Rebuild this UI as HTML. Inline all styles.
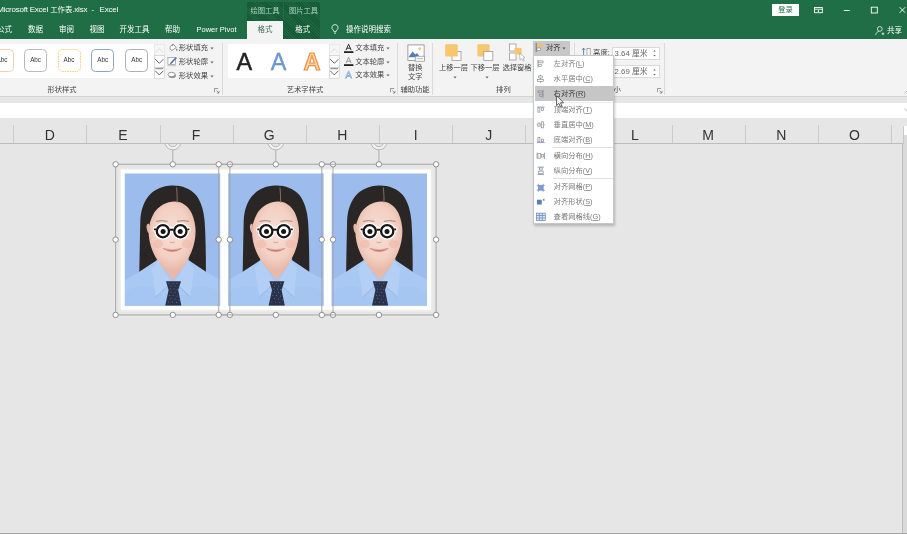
<!DOCTYPE html>
<html lang="zh-CN"><head><meta charset="utf-8"><title>Excel</title>
<style>
html,body{margin:0;padding:0;}
body{width:907px;height:534px;overflow:hidden;position:relative;background:#e6e6e6;font-family:"Liberation Sans","Noto Sans CJK SC",sans-serif;}
.t{position:absolute;white-space:nowrap;display:block;}
.r{position:absolute;}
svg{position:absolute;overflow:visible;}
u{text-decoration:underline;text-underline-offset:0.8px;text-decoration-thickness:0.5px;text-decoration-color:#9a9a9a;}
#w{position:absolute;left:0;top:0;width:907px;height:534px;will-change:transform;}
</style></head><body><div id="w">
<div class="r" style="left:0.0px;top:0.0px;width:907.0px;height:39.0px;background:#1f6e45;"></div>
<div class="r" style="left:246.7px;top:2.2px;width:73.3px;height:36.8px;background:repeating-linear-gradient(45deg,#155836 0 1px,#1c6740 1px 2px);"></div>
<div class="r" style="left:283.3px;top:2.2px;width:0.8px;height:17.0px;background:#1f6f44;"></div>
<span class="t" style="left:-2.8px;top:4.4px;height:12px;line-height:12px;font-size:8px;color:#fff;letter-spacing:-0.22px;">Microsoft Excel <span style="font-size:7.4px;letter-spacing:0">工作表</span>.xlsx</span>
<span class="t" style="left:91.6px;top:4.4px;height:12px;line-height:12px;font-size:8px;color:#fff;">-</span>
<span class="t" style="left:99.6px;top:4.4px;height:12px;line-height:12px;font-size:8px;color:#fff;letter-spacing:-0.22px;">Excel</span>
<span class="t" style="left:265.0px;top:5.4px;height:12px;line-height:12px;font-size:7.3px;color:#b4d3c2;transform:translateX(-50%);">绘图工具</span>
<span class="t" style="left:303.5px;top:5.4px;height:12px;line-height:12px;font-size:7.3px;color:#b4d3c2;transform:translateX(-50%);">图片工具</span>
<div class="r" style="left:771.6px;top:4.4px;width:27.7px;height:11.4px;background:#fff;"></div>
<span class="t" style="left:785.5px;top:4.3px;height:12px;line-height:12px;font-size:7.3px;color:#1f6e45;transform:translateX(-50%);">登录</span>
<svg style="left:810px;top:2px" width="97" height="18" viewBox="810 2 97 18" fill="none" stroke="#fff" stroke-width="0.9"><rect x="814.500" y="7.500" width="7.800" height="5.200"/><path d="M814.500 9.200H822.300M818.400 10V12" /><path d="M843.8 10.5H849.8"/><rect x="871.300" y="7.200" width="6" height="5.800"/><path d="M899.6 7.2L905.2 12.8M905.2 7.2L899.6 12.8"/></svg>
<span class="t" style="left:4.5px;top:24.2px;height:12px;line-height:12px;font-size:7.5px;color:#fff;transform:translateX(-50%);">公式</span>
<span class="t" style="left:35.5px;top:24.2px;height:12px;line-height:12px;font-size:7.5px;color:#fff;transform:translateX(-50%);">数据</span>
<span class="t" style="left:66.5px;top:24.2px;height:12px;line-height:12px;font-size:7.5px;color:#fff;transform:translateX(-50%);">审阅</span>
<span class="t" style="left:97.0px;top:24.2px;height:12px;line-height:12px;font-size:7.5px;color:#fff;transform:translateX(-50%);">视图</span>
<span class="t" style="left:134.5px;top:24.2px;height:12px;line-height:12px;font-size:7.5px;color:#fff;transform:translateX(-50%);">开发工具</span>
<span class="t" style="left:172.5px;top:24.2px;height:12px;line-height:12px;font-size:7.5px;color:#fff;transform:translateX(-50%);">帮助</span>
<span class="t" style="left:216.5px;top:24.2px;height:12px;line-height:12px;font-size:7.5px;color:#fff;transform:translateX(-50%);">Power Pivot</span>
<div class="r" style="left:246.7px;top:21.3px;width:36.5px;height:18.0px;background:#f3f3f3;"></div>
<span class="t" style="left:265.0px;top:24.4px;height:12px;line-height:12px;font-size:7.5px;color:#3b6b52;transform:translateX(-50%);">格式</span>
<span class="t" style="left:302.8px;top:24.4px;height:12px;line-height:12px;font-size:7.5px;color:#fff;transform:translateX(-50%);">格式</span>
<svg style="left:329px;top:23px" width="12" height="13" viewBox="0 0 12 13" fill="none" stroke="#fff" stroke-width="0.8"><path d="M6 1.6a3 3 0 0 0-1.7 5.5c.5.5.6.9.6 1.6h2.2c0-.7.1-1.1.6-1.6A3 3 0 0 0 6 1.6zM5 10.2h2"/></svg>
<span class="t" style="left:346.0px;top:24.4px;height:12px;line-height:12px;font-size:7.5px;color:#fff;">操作说明搜索</span>
<svg style="left:873.5px;top:24.8px" width="11" height="11" viewBox="0 0 12 12" fill="none" stroke="#fff" stroke-width="0.8"><circle cx="6.3" cy="4.3" r="2.6"/><path d="M1.8 11c.4-2.4 1.8-3.6 3.4-3.9M8.3 9.6h3M9.8 8.1v3"/></svg>
<span class="t" style="left:887.0px;top:24.5px;height:12px;line-height:12px;font-size:7.5px;color:#fff;">共享</span>
<div class="r" style="left:0.0px;top:39.0px;width:907.0px;height:57.5px;background:#f3f3f3;"></div>
<div class="r" style="left:0.0px;top:96.2px;width:907.0px;height:0.9px;background:#d4d4d4;"></div>
<div class="r" style="left:0.0px;top:102.5px;width:907.0px;height:15.3px;background:#fff;"></div>
<div class="r" style="left:0.0px;top:44.0px;width:153.6px;height:34.3px;background:#fff;"></div>
<div class="r" style="left:-9.5px;top:49.2px;width:23.0px;height:23.0px;border:1px solid #f2cfb0;border-radius:4.5px;box-sizing:border-box;background:#fff"></div>
<span class="t" style="left:2.0px;top:54.2px;height:12px;line-height:12px;font-size:6.3px;color:#333;transform:translateX(-50%);">Abc</span>
<div class="r" style="left:24.1px;top:49.2px;width:23.0px;height:23.0px;border:1px solid #bababa;border-radius:4.5px;box-sizing:border-box;background:#fff"></div>
<span class="t" style="left:35.6px;top:54.2px;height:12px;line-height:12px;font-size:6.3px;color:#333;transform:translateX(-50%);">Abc</span>
<svg style="left:57.5px;top:49.200px" width="23" height="23" viewBox="0 0 23 23"><rect x="0.500" y="0.500" width="22" height="22" rx="4.200" fill="#fff" stroke="#f5cb78" stroke-width="1" stroke-dasharray="1.500 1"/></svg>
<span class="t" style="left:69.0px;top:54.2px;height:12px;line-height:12px;font-size:6.3px;color:#333;transform:translateX(-50%);">Abc</span>
<div class="r" style="left:91.2px;top:49.2px;width:23.0px;height:23.0px;border:1.5px solid #8fa5be;border-radius:4.5px;box-sizing:border-box;background:#fff"></div>
<span class="t" style="left:102.7px;top:54.2px;height:12px;line-height:12px;font-size:6.3px;color:#333;transform:translateX(-50%);">Abc</span>
<div class="r" style="left:125.2px;top:49.2px;width:23.0px;height:23.0px;border:1px solid #b0b0b0;border-radius:4.5px;box-sizing:border-box;background:#fff"></div>
<span class="t" style="left:136.7px;top:54.2px;height:12px;line-height:12px;font-size:6.3px;color:#333;transform:translateX(-50%);">Abc</span>
<svg style="left:153.8px;top:44px" width="10.6" height="35" viewBox="0 0 10.6 35" fill="none"><rect x="0.3" y="0.3" width="10" height="11" fill="#f6f6f6" stroke="#e2e2e2" stroke-width="0.6"/><rect x="0.3" y="11.5" width="10" height="12" fill="#fdfdfd" stroke="#c9c9c9" stroke-width="0.6"/><rect x="0.3" y="23.7" width="10" height="10.8" fill="#fdfdfd" stroke="#c9c9c9" stroke-width="0.6"/><path d="M1.4 8.6L5.3 4.7L9.2 8.6" stroke="#d6d6d6" stroke-width="0.8"/><path d="M1.2 15.2L5.3 19.3L9.4 15.2" stroke="#555" stroke-width="0.9"/><path d="M1.4 24.6H9.2" stroke="#999" stroke-width="1.3"/><path d="M1.2 26.8L5.3 30.9L9.4 26.8" stroke="#555" stroke-width="0.9"/></svg>
<svg style="left:329.4px;top:44px" width="10.6" height="35" viewBox="0 0 10.6 35" fill="none"><rect x="0.3" y="0.3" width="10" height="11" fill="#f6f6f6" stroke="#e2e2e2" stroke-width="0.6"/><rect x="0.3" y="11.5" width="10" height="12" fill="#fdfdfd" stroke="#c9c9c9" stroke-width="0.6"/><rect x="0.3" y="23.7" width="10" height="10.8" fill="#fdfdfd" stroke="#c9c9c9" stroke-width="0.6"/><path d="M1.4 8.6L5.3 4.7L9.2 8.6" stroke="#d6d6d6" stroke-width="0.8"/><path d="M1.2 15.2L5.3 19.3L9.4 15.2" stroke="#555" stroke-width="0.9"/><path d="M1.4 24.6H9.2" stroke="#999" stroke-width="1.3"/><path d="M1.2 26.8L5.3 30.9L9.4 26.8" stroke="#555" stroke-width="0.9"/></svg>
<span class="t" style="left:178.8px;top:42.4px;height:12px;line-height:12px;font-size:7.3px;color:#444;">形状填充</span>
<svg style="left:209.5px;top:47.4px" width="4" height="3" viewBox="0 0 4 3"><path d="M0.4 0.6H3.6L2 2.4z" fill="#666"/></svg>
<span class="t" style="left:178.8px;top:55.5px;height:12px;line-height:12px;font-size:7.3px;color:#444;">形状轮廓</span>
<svg style="left:209.5px;top:60.5px" width="4" height="3" viewBox="0 0 4 3"><path d="M0.4 0.6H3.6L2 2.4z" fill="#666"/></svg>
<span class="t" style="left:178.8px;top:69.5px;height:12px;line-height:12px;font-size:7.3px;color:#444;">形状效果</span>
<svg style="left:209.5px;top:74.5px" width="4" height="3" viewBox="0 0 4 3"><path d="M0.4 0.6H3.6L2 2.4z" fill="#666"/></svg>
<svg style="left:167.6px;top:42.800px" width="10.200" height="9.350" viewBox="0 0 12 11" fill="none" stroke="#777" stroke-width="0.9"><path d="M3.2 3.6L6.4 1.4L9.6 5.4L5.6 8.2C4.6 8.8 3.4 8.4 2.8 7.4C2.2 6.2 2.4 4.4 3.2 3.6z" fill="#fff"/><path d="M5.4 1.2V3.6"/><path d="M10.4 6.6c.5.8.8 1.2.8 1.7a.8.8 0 0 1-1.6 0c0-.5.3-.9.8-1.7z" fill="#666" stroke="none"/></svg>
<svg style="left:166.8px;top:55.800px" width="11" height="11" viewBox="0 0 12 12" fill="none" stroke="#9a9a9a" stroke-width="0.8"><rect x="1" y="1.6" width="8.4" height="7.6" fill="#fff"/><path d="M3.6 7.4L9.6 1.2L10.8 2.4L4.8 8.4L3.2 8.8z" fill="#4f74a8" stroke="#4f74a8" stroke-width="0.1"/><path d="M0.8 10.6H10" stroke="#c8c8c8" stroke-width="1.2"/></svg>
<svg style="left:167.4px;top:70.800px" width="9.600" height="8" viewBox="0 0 12 10" fill="none" stroke="#777" stroke-width="0.9"><ellipse cx="6.6" cy="5.8" rx="4.4" ry="2.8" fill="#888" stroke="none"/><ellipse cx="5.8" cy="4.4" rx="4.4" ry="2.8" fill="#fff"/></svg>
<span class="t" style="left:62.0px;top:83.8px;height:12px;line-height:12px;font-size:7.3px;color:#444;transform:translateX(-50%);">形状样式</span>
<svg style="left:214.4px;top:88.0px" width="6" height="6" viewBox="0 0 6 6" fill="none" stroke="#777" stroke-width="0.7"><path d="M0.5 4.2V0.5H4.2"/><path d="M2.4 2.4L5 5M5 2.8V5H2.8"/></svg>
<div class="r" style="left:222.0px;top:42.5px;width:0.9px;height:52.0px;background:#dadada;"></div>
<div class="r" style="left:228.0px;top:44.0px;width:101.2px;height:34.3px;background:#fff;"></div>
<span class="t" style="left:244.3px;top:49.2px;height:26px;line-height:26px;font-size:23.4px;color:#222;transform:translateX(-50%);-webkit-text-stroke:0.5px #222;">A</span>
<span class="t" style="left:278.5px;top:49.2px;height:26px;line-height:26px;font-size:23.4px;color:#6e98d6;transform:translateX(-50%);-webkit-text-stroke:0.3px #5a86c8;">A</span>
<span class="t" style="left:311.9px;top:49.2px;height:26px;line-height:26px;font-size:23.4px;color:#fbd5a8;transform:translateX(-50%);-webkit-text-stroke:1.1px #ef8f3a;font-weight:bold;">A</span>
<span class="t" style="left:355.2px;top:42.4px;height:12px;line-height:12px;font-size:7.3px;color:#444;">文本填充</span>
<svg style="left:385.5px;top:47.4px" width="4" height="3" viewBox="0 0 4 3"><path d="M0.4 0.6H3.6L2 2.4z" fill="#666"/></svg>
<span class="t" style="left:355.2px;top:55.6px;height:12px;line-height:12px;font-size:7.3px;color:#444;">文本轮廓</span>
<svg style="left:385.5px;top:60.6px" width="4" height="3" viewBox="0 0 4 3"><path d="M0.4 0.6H3.6L2 2.4z" fill="#666"/></svg>
<span class="t" style="left:355.2px;top:69.3px;height:12px;line-height:12px;font-size:7.3px;color:#444;">文本效果</span>
<svg style="left:385.5px;top:74.3px" width="4" height="3" viewBox="0 0 4 3"><path d="M0.4 0.6H3.6L2 2.4z" fill="#666"/></svg>
<svg style="left:342.5px;top:43px" width="12" height="11" viewBox="0 0 12 11" fill="none"><path d="M3 7.2L5.6 1.2L8.2 7.2M4 5.2H7.2" stroke="#333" stroke-width="1"/><rect x="1" y="8.2" width="9.4" height="1.8" fill="#222"/></svg>
<svg style="left:342.5px;top:56px" width="12" height="11" viewBox="0 0 12 11" fill="none"><path d="M3 7.2L5.6 1.2L8.2 7.2M4 5.2H7.2" stroke="#888" stroke-width="0.8"/><rect x="1" y="8.2" width="9.4" height="1.8" fill="#222"/></svg>
<svg style="left:342.5px;top:69.5px" width="12" height="11" viewBox="0 0 12 11" fill="none"><path d="M2.6 8.6L5.6 1.4L8.6 8.6M3.8 6H7.4" stroke="#5b8fd0" stroke-width="1.3" stroke-linejoin="round"/><path d="M2.6 8.6L5.6 1.4L8.6 8.6M3.8 6H7.4" stroke="#fff" stroke-width="0.4"/></svg>
<span class="t" style="left:305.0px;top:83.8px;height:12px;line-height:12px;font-size:7.3px;color:#444;transform:translateX(-50%);">艺术字样式</span>
<svg style="left:390.1px;top:88.0px" width="6" height="6" viewBox="0 0 6 6" fill="none" stroke="#777" stroke-width="0.7"><path d="M0.5 4.2V0.5H4.2"/><path d="M2.4 2.4L5 5M5 2.8V5H2.8"/></svg>
<div class="r" style="left:397.3px;top:42.5px;width:0.9px;height:52.0px;background:#dadada;"></div>
<svg style="left:406.5px;top:43.5px" width="19" height="19" viewBox="0 0 19 19" fill="none"><rect x="0.9" y="0.9" width="16.2" height="15.6" fill="#fff" stroke="#8a8a8a" stroke-width="0.8"/><circle cx="12.8" cy="4.6" r="1.4" fill="#f3c669"/><path d="M1.4 13.2L5.6 7.6L8.4 10.4L10 9L13 13.2z" fill="#4f7fb8"/><rect x="8.2" y="12.2" width="9.4" height="5" fill="#fff" stroke="#8a8a8a" stroke-width="0.7"/><path d="M9.6 14.7H16" stroke="#9ab" stroke-width="0.8"/></svg>
<span class="t" style="left:415.3px;top:61.9px;height:12px;line-height:12px;font-size:7.3px;color:#444;transform:translateX(-50%);">替换</span>
<span class="t" style="left:415.3px;top:70.5px;height:12px;line-height:12px;font-size:7.3px;color:#444;transform:translateX(-50%);">文字</span>
<span class="t" style="left:415.0px;top:83.8px;height:12px;line-height:12px;font-size:7.3px;color:#444;transform:translateX(-50%);">辅助功能</span>
<div class="r" style="left:432.2px;top:42.5px;width:0.9px;height:52.0px;background:#dadada;"></div>
<svg style="left:444px;top:43px" width="19" height="19" viewBox="444 43 19 19"><rect x="452" y="51.4" width="9" height="9" fill="#fff" stroke="#9a9a9a" stroke-width="0.8"/><rect x="445.200" y="44.200" width="12.600" height="12.300" rx="1" fill="#f8c66c"/></svg>
<span class="t" style="left:453.5px;top:61.9px;height:12px;line-height:12px;font-size:7.3px;color:#444;transform:translateX(-50%);">上移一层</span>
<svg style="left:452.8px;top:76px" width="4" height="3" viewBox="0 0 4 3"><path d="M0.4 0.6H3.6L2 2.4z" fill="#666"/></svg>
<svg style="left:476px;top:43px" width="19" height="19" viewBox="476 43 19 19"><rect x="477.400" y="44.200" width="12.200" height="12.300" rx="1" fill="#f8c66c"/><rect x="483.8" y="51.4" width="9" height="9" fill="#fff" stroke="#9a9a9a" stroke-width="0.8"/></svg>
<span class="t" style="left:485.0px;top:61.9px;height:12px;line-height:12px;font-size:7.3px;color:#444;transform:translateX(-50%);">下移一层</span>
<svg style="left:484.6px;top:76px" width="4" height="3" viewBox="0 0 4 3"><path d="M0.4 0.6H3.6L2 2.4z" fill="#666"/></svg>
<svg style="left:508px;top:43px" width="19" height="19" viewBox="508 43 19 19" fill="none"><rect x="509.4" y="44" width="6.6" height="7" fill="#fff" stroke="#9a9a9a" stroke-width="0.8"/><rect x="509.4" y="53" width="6.6" height="7" fill="#fff" stroke="#9a9a9a" stroke-width="0.8"/><rect x="514.6" y="48" width="7" height="6.4" fill="#f8c66c"/><path d="M519.6 53.2L520 60.2L521.8 58.6L523.2 61.2L524.2 60.6L523 58.2L525 57.8z" fill="#fff" stroke="#999" stroke-width="0.6"/></svg>
<span class="t" style="left:517.0px;top:61.9px;height:12px;line-height:12px;font-size:7.3px;color:#444;transform:translateX(-50%);">选择窗格</span>
<span class="t" style="left:503.4px;top:83.8px;height:12px;line-height:12px;font-size:7.3px;color:#444;transform:translateX(-50%);">排列</span>
<div class="r" style="left:533.4px;top:41.2px;width:36.4px;height:13.6px;background:#c8c8c8;"></div>
<svg style="left:535px;top:42px" width="9" height="12" viewBox="0 0 9 12" fill="none"><path d="M1.2 1V10" stroke="#666" stroke-width="0.8"/><rect x="2" y="2" width="5.4" height="2.6" fill="#f3c15f"/><rect x="2" y="6" width="3.6" height="2.6" fill="#fff" stroke="#777" stroke-width="0.6"/></svg>
<span class="t" style="left:546.0px;top:42.2px;height:12px;line-height:12px;font-size:7.3px;color:#333;">对齐</span>
<svg style="left:562.3px;top:47.2px" width="4" height="3" viewBox="0 0 4 3"><path d="M0.4 0.6H3.6L2 2.4z" fill="#555"/></svg>
<div class="r" style="left:574.2px;top:42.5px;width:0.9px;height:52.0px;background:#dadada;"></div>
<svg style="left:580.5px;top:46.5px" width="11" height="12" viewBox="0 0 11 12" fill="none"><path d="M2.6 1.2V10.2M1 3L2.6 1.2L4.2 3M1 8.6L2.6 10.4L4.2 8.6" stroke="#3f6fb3" stroke-width="0.8"/><rect x="6" y="1.4" width="3.2" height="8.8" fill="#fff" stroke="#888" stroke-width="0.7"/></svg>
<span class="t" style="left:593.1px;top:46.6px;height:12px;line-height:12px;font-size:7.3px;color:#444;">高度:</span>
<div class="r" style="left:612.3px;top:47.2px;width:47.7px;height:12.6px;box-sizing:border-box;border:0.8px solid #dadada;background:#fff"></div>
<span class="t" style="left:614.6px;top:47.6px;height:12px;line-height:12px;font-size:7.8px;color:#666;">3.64 厘米</span>
<svg style="left:652px;top:48.3px" width="5" height="10" viewBox="0 0 5 10"><path d="M1.200 3.400L2.500 1.900L3.800 3.400zM1.200 7L2.500 8.500L3.800 7z" fill="#666"/></svg>
<div class="r" style="left:612.3px;top:65.4px;width:47.7px;height:12.6px;box-sizing:border-box;border:0.8px solid #dadada;background:#fff"></div>
<span class="t" style="left:614.6px;top:65.8px;height:12px;line-height:12px;font-size:7.8px;color:#666;">2.69 厘米</span>
<svg style="left:652px;top:66.5px" width="5" height="10" viewBox="0 0 5 10"><path d="M1.200 3.400L2.500 1.900L3.800 3.400zM1.200 7L2.500 8.500L3.800 7z" fill="#666"/></svg>
<span class="t" style="left:613.6px;top:83.8px;height:12px;line-height:12px;font-size:7.3px;color:#444;transform:translateX(-50%);">大小</span>
<svg style="left:657.0px;top:88.0px" width="6" height="6" viewBox="0 0 6 6" fill="none" stroke="#777" stroke-width="0.7"><path d="M0.5 4.2V0.5H4.2"/><path d="M2.4 2.4L5 5M5 2.8V5H2.8"/></svg>
<div class="r" style="left:664.0px;top:42.5px;width:0.9px;height:52.0px;background:#dadada;"></div>
<svg style="left:901.5px;top:88.5px" width="8" height="6" viewBox="0 0 8 6" fill="none" stroke="#999" stroke-width="0.7"><path d="M2.6 4.4L5.4 1.8L8.2 4.4"/></svg>
<svg style="left:901.5px;top:107px" width="8" height="6" viewBox="0 0 8 6" fill="none" stroke="#999" stroke-width="0.7"><path d="M2.6 1.800L5.4 4.400L8.2 1.800"/></svg>
<svg style="left:0;top:0" width="907" height="534" viewBox="0 0 907 534"><defs><filter id="soft" x="-5%" y="-5%" width="110%" height="110%"><feGaussianBlur stdDeviation="0.45"/></filter><clipPath id="clipb"><rect x="124.800" y="173.500" width="95.400" height="132.200"/></clipPath><radialGradient id="skin" cx="0.5" cy="0.45" r="0.62"><stop offset="0" stop-color="#f8ded4"/><stop offset="0.6" stop-color="#f3d0c3"/><stop offset="1" stop-color="#e2b09f"/></radialGradient></defs><rect x="119.300" y="168.400" width="313.200" height="143.600" fill="#ecece9"/><g transform="translate(0.0 0)"><rect x="120.8" y="169.7" width="103.4" height="140.1" fill="#fff"/><rect x="124.8" y="173.5" width="95.4" height="132.2" fill="#9bbcec"/><g clip-path="url(#clipb)"><g filter="url(#soft)"><path d="M124.8 305.7V280L139 272L156 259.5H189L206 272L220.2 279.5V305.7z" fill="#a9c8f4"/><path d="M124.8 305.7V292C138 284 150 285 158 291L172.8 305.7z" fill="#a2c3f1" opacity=".5"/><path d="M220.2 305.7V292C207 284 195 285 187 291L172.8 305.700z" fill="#a2c3f1" opacity=".4"/><path d="M173 185.5C163.500 185.200 154 189.200 148.200 196.600C142.800 203.600 140.700 212 140.300 221C139.900 238 139.600 255 139.300 271.800L156.800 260.200L160 240H186L188.800 260.200L205.900 271.800C205.900 254 205.700 238 204.700 222C203.900 211 201.200 202 196.200 195.300C190.700 188.500 182 185.600 173 185.500z" fill="#2a2825"/><path d="M159 254L158 262.500L173.200 280L187.200 262.500L186.200 254z" fill="#e8b8a8"/><path d="M174.500 201.400C167 201.600 158.500 205.500 154 213C150.500 219 148.600 226 148.600 231C148.600 238 150 245 153 252C156 259 160 264.500 165 268C167.600 270 170 270.800 172.400 270.800C174.800 270.800 177.200 270 179.800 268C184.800 264.500 188.600 259 191.400 252C194.200 245 195.600 238 195.600 231C195.600 226 194.400 219 191.600 213C188 205.800 182 201.300 174.500 201.400z" fill="url(#skin)"/><path d="M149.200 224c-1.800-1-3 1-2.600 3.800c.4 3.200 1.400 5.400 3 6z" fill="#e4b5a5"/><path d="M176.600 187.500C177 193 177.400 198 177.200 202.600" stroke="#8f776c" stroke-width="0.9" fill="none"/><path d="M156 221.400Q161.500 219.800 167.500 221.400M177 221.400Q183 219.800 189 221.400" stroke="#6b5a52" stroke-width="0.9" fill="none" opacity=".7"/><ellipse cx="158" cy="244" rx="5" ry="4.200" fill="#eeb3a4" opacity=".5"/><ellipse cx="187" cy="244" rx="5" ry="4.200" fill="#eeb3a4" opacity=".5"/><path d="M169.800 242q2.400 1.600 5 0" stroke="#d29c8b" stroke-width="0.900" fill="none"/><path d="M163 248.400Q172.400 254.800 181.600 248.400Q172.400 251.400 163 248.400z" fill="#c97e70" stroke="#c97e70" stroke-width="0.500"/><path d="M157.800 260.500L151.500 268.500L156 297L171.500 282.500z" fill="#b3cff6"/><path d="M187.400 260.500L193.500 268.500L190.500 297L174.500 282.500z" fill="#b3cff6"/><path d="M156 297L171.500 282.500M190.500 297L174.500 282.500" stroke="#86a6d8" stroke-width="0.600" fill="none"/><path d="M166 281.300H181L178.200 290L181.400 305.700H165.200L168.600 290z" fill="#2a3048"/><g fill="#96a3c8"><circle cx="169.0" cy="283.5" r="0.45"/><circle cx="173.0" cy="283.5" r="0.45"/><circle cx="177.0" cy="283.5" r="0.45"/><circle cx="171.0" cy="286.0" r="0.45"/><circle cx="175.0" cy="286.0" r="0.45"/><circle cx="170.5" cy="289.0" r="0.45"/><circle cx="174.0" cy="289.0" r="0.45"/><circle cx="177.0" cy="289.5" r="0.45"/><circle cx="171.0" cy="292.0" r="0.45"/><circle cx="175.0" cy="292.5" r="0.45"/><circle cx="169.5" cy="295.5" r="0.45"/><circle cx="173.0" cy="295.5" r="0.45"/><circle cx="177.0" cy="296.0" r="0.45"/><circle cx="171.0" cy="298.5" r="0.45"/><circle cx="175.0" cy="299.0" r="0.45"/><circle cx="168.5" cy="302.0" r="0.45"/><circle cx="172.5" cy="302.0" r="0.45"/><circle cx="176.5" cy="302.5" r="0.45"/><circle cx="179.0" cy="300.0" r="0.45"/></g></g></g><g><circle cx="162.900" cy="231.200" r="8.500" fill="#fff"/><circle cx="180.400" cy="231.200" r="8.500" fill="#fff"/><rect x="152.800" y="226.800" width="37.800" height="5" rx="2.200" fill="#fff"/><circle cx="162.900" cy="231.200" r="6.100" fill="#fff" stroke="#161616" stroke-width="2.300"/><circle cx="180.400" cy="231.200" r="6.100" fill="#fff" stroke="#161616" stroke-width="2.300"/><path d="M169.600 229.700H173.700M153.900 229.400H156M187.300 229.400H189.400" stroke="#161616" stroke-width="1.900"/><circle cx="163.100" cy="231.500" r="2.500" fill="#161616"/><circle cx="180.200" cy="231.500" r="2.500" fill="#161616"/></g></g><g transform="translate(103.4 0)"><rect x="120.8" y="169.7" width="103.4" height="140.1" fill="#fff"/><rect x="124.8" y="173.5" width="95.4" height="132.2" fill="#9bbcec"/><g clip-path="url(#clipb)"><g filter="url(#soft)"><path d="M124.8 305.7V280L139 272L156 259.5H189L206 272L220.2 279.5V305.7z" fill="#a9c8f4"/><path d="M124.8 305.7V292C138 284 150 285 158 291L172.8 305.7z" fill="#a2c3f1" opacity=".5"/><path d="M220.2 305.7V292C207 284 195 285 187 291L172.8 305.700z" fill="#a2c3f1" opacity=".4"/><path d="M173 185.5C163.500 185.200 154 189.200 148.200 196.600C142.800 203.600 140.700 212 140.300 221C139.900 238 139.600 255 139.300 271.800L156.800 260.200L160 240H186L188.800 260.200L205.900 271.800C205.900 254 205.700 238 204.700 222C203.900 211 201.200 202 196.200 195.300C190.700 188.500 182 185.600 173 185.500z" fill="#2a2825"/><path d="M159 254L158 262.500L173.200 280L187.200 262.500L186.200 254z" fill="#e8b8a8"/><path d="M174.500 201.400C167 201.600 158.500 205.500 154 213C150.500 219 148.600 226 148.600 231C148.600 238 150 245 153 252C156 259 160 264.500 165 268C167.600 270 170 270.800 172.400 270.800C174.800 270.800 177.200 270 179.800 268C184.800 264.500 188.600 259 191.400 252C194.200 245 195.600 238 195.600 231C195.600 226 194.400 219 191.600 213C188 205.800 182 201.300 174.500 201.400z" fill="url(#skin)"/><path d="M149.200 224c-1.800-1-3 1-2.600 3.800c.4 3.200 1.400 5.400 3 6z" fill="#e4b5a5"/><path d="M176.600 187.500C177 193 177.400 198 177.200 202.600" stroke="#8f776c" stroke-width="0.9" fill="none"/><path d="M156 221.400Q161.500 219.800 167.500 221.400M177 221.400Q183 219.800 189 221.400" stroke="#6b5a52" stroke-width="0.9" fill="none" opacity=".7"/><ellipse cx="158" cy="244" rx="5" ry="4.200" fill="#eeb3a4" opacity=".5"/><ellipse cx="187" cy="244" rx="5" ry="4.200" fill="#eeb3a4" opacity=".5"/><path d="M169.800 242q2.400 1.600 5 0" stroke="#d29c8b" stroke-width="0.900" fill="none"/><path d="M163 248.400Q172.400 254.800 181.600 248.400Q172.400 251.400 163 248.400z" fill="#c97e70" stroke="#c97e70" stroke-width="0.500"/><path d="M157.800 260.500L151.500 268.500L156 297L171.500 282.500z" fill="#b3cff6"/><path d="M187.400 260.500L193.500 268.500L190.500 297L174.500 282.500z" fill="#b3cff6"/><path d="M156 297L171.500 282.500M190.500 297L174.500 282.500" stroke="#86a6d8" stroke-width="0.600" fill="none"/><path d="M166 281.300H181L178.200 290L181.400 305.700H165.200L168.600 290z" fill="#2a3048"/><g fill="#96a3c8"><circle cx="169.0" cy="283.5" r="0.45"/><circle cx="173.0" cy="283.5" r="0.45"/><circle cx="177.0" cy="283.5" r="0.45"/><circle cx="171.0" cy="286.0" r="0.45"/><circle cx="175.0" cy="286.0" r="0.45"/><circle cx="170.5" cy="289.0" r="0.45"/><circle cx="174.0" cy="289.0" r="0.45"/><circle cx="177.0" cy="289.5" r="0.45"/><circle cx="171.0" cy="292.0" r="0.45"/><circle cx="175.0" cy="292.5" r="0.45"/><circle cx="169.5" cy="295.5" r="0.45"/><circle cx="173.0" cy="295.5" r="0.45"/><circle cx="177.0" cy="296.0" r="0.45"/><circle cx="171.0" cy="298.5" r="0.45"/><circle cx="175.0" cy="299.0" r="0.45"/><circle cx="168.5" cy="302.0" r="0.45"/><circle cx="172.5" cy="302.0" r="0.45"/><circle cx="176.5" cy="302.5" r="0.45"/><circle cx="179.0" cy="300.0" r="0.45"/></g></g></g><g><circle cx="162.900" cy="231.200" r="8.500" fill="#fff"/><circle cx="180.400" cy="231.200" r="8.500" fill="#fff"/><rect x="152.800" y="226.800" width="37.800" height="5" rx="2.200" fill="#fff"/><circle cx="162.900" cy="231.200" r="6.100" fill="#fff" stroke="#161616" stroke-width="2.300"/><circle cx="180.400" cy="231.200" r="6.100" fill="#fff" stroke="#161616" stroke-width="2.300"/><path d="M169.600 229.700H173.700M153.900 229.400H156M187.300 229.400H189.400" stroke="#161616" stroke-width="1.900"/><circle cx="163.100" cy="231.500" r="2.500" fill="#161616"/><circle cx="180.200" cy="231.500" r="2.500" fill="#161616"/></g></g><g transform="translate(206.8 0)"><rect x="120.8" y="169.7" width="103.4" height="140.1" fill="#fff"/><rect x="124.8" y="173.5" width="95.4" height="132.2" fill="#9bbcec"/><g clip-path="url(#clipb)"><g filter="url(#soft)"><path d="M124.8 305.7V280L139 272L156 259.5H189L206 272L220.2 279.5V305.7z" fill="#a9c8f4"/><path d="M124.8 305.7V292C138 284 150 285 158 291L172.8 305.7z" fill="#a2c3f1" opacity=".5"/><path d="M220.2 305.7V292C207 284 195 285 187 291L172.8 305.700z" fill="#a2c3f1" opacity=".4"/><path d="M173 185.5C163.500 185.200 154 189.200 148.200 196.600C142.800 203.600 140.700 212 140.300 221C139.900 238 139.600 255 139.300 271.800L156.800 260.200L160 240H186L188.800 260.200L205.900 271.800C205.900 254 205.700 238 204.700 222C203.900 211 201.200 202 196.200 195.300C190.700 188.500 182 185.600 173 185.500z" fill="#2a2825"/><path d="M159 254L158 262.500L173.200 280L187.200 262.500L186.200 254z" fill="#e8b8a8"/><path d="M174.500 201.400C167 201.600 158.500 205.500 154 213C150.500 219 148.600 226 148.600 231C148.600 238 150 245 153 252C156 259 160 264.500 165 268C167.600 270 170 270.800 172.400 270.800C174.800 270.800 177.200 270 179.800 268C184.800 264.500 188.600 259 191.400 252C194.200 245 195.600 238 195.600 231C195.600 226 194.400 219 191.600 213C188 205.800 182 201.300 174.500 201.400z" fill="url(#skin)"/><path d="M149.200 224c-1.800-1-3 1-2.600 3.800c.4 3.200 1.400 5.400 3 6z" fill="#e4b5a5"/><path d="M176.600 187.500C177 193 177.400 198 177.200 202.600" stroke="#8f776c" stroke-width="0.9" fill="none"/><path d="M156 221.400Q161.500 219.800 167.500 221.400M177 221.400Q183 219.800 189 221.400" stroke="#6b5a52" stroke-width="0.9" fill="none" opacity=".7"/><ellipse cx="158" cy="244" rx="5" ry="4.200" fill="#eeb3a4" opacity=".5"/><ellipse cx="187" cy="244" rx="5" ry="4.200" fill="#eeb3a4" opacity=".5"/><path d="M169.800 242q2.400 1.600 5 0" stroke="#d29c8b" stroke-width="0.900" fill="none"/><path d="M163 248.400Q172.400 254.800 181.600 248.400Q172.400 251.400 163 248.400z" fill="#c97e70" stroke="#c97e70" stroke-width="0.500"/><path d="M157.800 260.500L151.500 268.500L156 297L171.500 282.500z" fill="#b3cff6"/><path d="M187.400 260.500L193.500 268.500L190.500 297L174.500 282.500z" fill="#b3cff6"/><path d="M156 297L171.500 282.500M190.500 297L174.500 282.500" stroke="#86a6d8" stroke-width="0.600" fill="none"/><path d="M166 281.300H181L178.200 290L181.400 305.700H165.200L168.600 290z" fill="#2a3048"/><g fill="#96a3c8"><circle cx="169.0" cy="283.5" r="0.45"/><circle cx="173.0" cy="283.5" r="0.45"/><circle cx="177.0" cy="283.5" r="0.45"/><circle cx="171.0" cy="286.0" r="0.45"/><circle cx="175.0" cy="286.0" r="0.45"/><circle cx="170.5" cy="289.0" r="0.45"/><circle cx="174.0" cy="289.0" r="0.45"/><circle cx="177.0" cy="289.5" r="0.45"/><circle cx="171.0" cy="292.0" r="0.45"/><circle cx="175.0" cy="292.5" r="0.45"/><circle cx="169.5" cy="295.5" r="0.45"/><circle cx="173.0" cy="295.5" r="0.45"/><circle cx="177.0" cy="296.0" r="0.45"/><circle cx="171.0" cy="298.5" r="0.45"/><circle cx="175.0" cy="299.0" r="0.45"/><circle cx="168.5" cy="302.0" r="0.45"/><circle cx="172.5" cy="302.0" r="0.45"/><circle cx="176.5" cy="302.5" r="0.45"/><circle cx="179.0" cy="300.0" r="0.45"/></g></g></g><g><circle cx="162.900" cy="231.200" r="8.500" fill="#fff"/><circle cx="180.400" cy="231.200" r="8.500" fill="#fff"/><rect x="152.800" y="226.800" width="37.800" height="5" rx="2.200" fill="#fff"/><circle cx="162.900" cy="231.200" r="6.100" fill="#fff" stroke="#161616" stroke-width="2.300"/><circle cx="180.400" cy="231.200" r="6.100" fill="#fff" stroke="#161616" stroke-width="2.300"/><path d="M169.600 229.700H173.700M153.900 229.400H156M187.300 229.400H189.400" stroke="#161616" stroke-width="1.900"/><circle cx="163.100" cy="231.500" r="2.500" fill="#161616"/><circle cx="180.200" cy="231.500" r="2.500" fill="#161616"/></g></g><rect x="115.6" y="164.3" width="114.3" height="150.6" fill="none" stroke="#a2a2a2" stroke-opacity="0.8" stroke-width="1.2"/><path d="M172.8 164.3V150.0" stroke="#a9a9a9" stroke-width="0.9"/><circle cx="172.8" cy="141.800" r="6.400" fill="none" stroke="#f2f2f2" stroke-width="3.200"/><circle cx="172.8" cy="141.800" r="8" fill="none" stroke="#a6a6a6" stroke-width="0.800"/><circle cx="172.8" cy="141.800" r="4.900" fill="none" stroke="#a6a6a6" stroke-width="0.800"/><circle cx="115.6" cy="164.3" r="2.7" fill="#fff" stroke="#858585" stroke-width="0.9"/><circle cx="172.8" cy="164.3" r="2.7" fill="#fff" stroke="#858585" stroke-width="0.9"/><circle cx="229.9" cy="164.3" r="2.7" fill="#fff" stroke="#858585" stroke-width="0.9"/><circle cx="115.6" cy="239.6" r="2.7" fill="#fff" stroke="#858585" stroke-width="0.9"/><circle cx="229.9" cy="239.6" r="2.7" fill="#fff" stroke="#858585" stroke-width="0.9"/><circle cx="115.6" cy="314.9" r="2.7" fill="#fff" stroke="#858585" stroke-width="0.9"/><circle cx="172.8" cy="314.9" r="2.7" fill="#fff" stroke="#858585" stroke-width="0.9"/><circle cx="229.9" cy="314.9" r="2.7" fill="#fff" stroke="#858585" stroke-width="0.9"/><rect x="218.7" y="164.3" width="114.3" height="150.6" fill="none" stroke="#a2a2a2" stroke-opacity="0.8" stroke-width="1.2"/><path d="M275.8 164.3V150.0" stroke="#a9a9a9" stroke-width="0.9"/><circle cx="275.8" cy="141.800" r="6.400" fill="none" stroke="#f2f2f2" stroke-width="3.200"/><circle cx="275.8" cy="141.800" r="8" fill="none" stroke="#a6a6a6" stroke-width="0.800"/><circle cx="275.8" cy="141.800" r="4.900" fill="none" stroke="#a6a6a6" stroke-width="0.800"/><circle cx="218.7" cy="164.3" r="2.7" fill="#fff" stroke="#858585" stroke-width="0.9"/><circle cx="275.8" cy="164.3" r="2.7" fill="#fff" stroke="#858585" stroke-width="0.9"/><circle cx="333.0" cy="164.3" r="2.7" fill="#fff" stroke="#858585" stroke-width="0.9"/><circle cx="218.7" cy="239.6" r="2.7" fill="#fff" stroke="#858585" stroke-width="0.9"/><circle cx="333.0" cy="239.6" r="2.7" fill="#fff" stroke="#858585" stroke-width="0.9"/><circle cx="218.7" cy="314.9" r="2.7" fill="#fff" stroke="#858585" stroke-width="0.9"/><circle cx="275.8" cy="314.9" r="2.7" fill="#fff" stroke="#858585" stroke-width="0.9"/><circle cx="333.0" cy="314.9" r="2.7" fill="#fff" stroke="#858585" stroke-width="0.9"/><rect x="321.8" y="164.3" width="114.3" height="150.6" fill="none" stroke="#a2a2a2" stroke-opacity="0.8" stroke-width="1.2"/><path d="M378.9 164.3V150.0" stroke="#a9a9a9" stroke-width="0.9"/><circle cx="378.9" cy="141.800" r="6.400" fill="none" stroke="#f2f2f2" stroke-width="3.200"/><circle cx="378.9" cy="141.800" r="8" fill="none" stroke="#a6a6a6" stroke-width="0.800"/><circle cx="378.9" cy="141.800" r="4.900" fill="none" stroke="#a6a6a6" stroke-width="0.800"/><circle cx="321.8" cy="164.3" r="2.7" fill="#fff" stroke="#858585" stroke-width="0.9"/><circle cx="378.9" cy="164.3" r="2.7" fill="#fff" stroke="#858585" stroke-width="0.9"/><circle cx="436.1" cy="164.3" r="2.7" fill="#fff" stroke="#858585" stroke-width="0.9"/><circle cx="321.8" cy="239.6" r="2.7" fill="#fff" stroke="#858585" stroke-width="0.9"/><circle cx="436.1" cy="239.6" r="2.7" fill="#fff" stroke="#858585" stroke-width="0.9"/><circle cx="321.8" cy="314.9" r="2.7" fill="#fff" stroke="#858585" stroke-width="0.9"/><circle cx="378.9" cy="314.9" r="2.7" fill="#fff" stroke="#858585" stroke-width="0.9"/><circle cx="436.1" cy="314.9" r="2.7" fill="#fff" stroke="#858585" stroke-width="0.9"/></svg>
<div class="r" style="left:0.0px;top:117.8px;width:907.0px;height:25.6px;background:#e6e6e6;"></div>
<div class="r" style="left:0.0px;top:143.3px;width:903.3px;height:0.9px;background:#bdbdbd;"></div>
<div class="r" style="left:13.2px;top:125.0px;width:0.9px;height:18.4px;background:#cbcbcb;"></div>
<span class="t" style="left:49.8px;top:127.2px;height:16px;line-height:16px;font-size:14px;color:#333;transform:translateX(-50%);">D</span>
<div class="r" style="left:86.4px;top:125.0px;width:0.9px;height:18.4px;background:#cbcbcb;"></div>
<span class="t" style="left:123.0px;top:127.2px;height:16px;line-height:16px;font-size:14px;color:#333;transform:translateX(-50%);">E</span>
<div class="r" style="left:159.5px;top:125.0px;width:0.9px;height:18.4px;background:#cbcbcb;"></div>
<span class="t" style="left:196.1px;top:127.2px;height:16px;line-height:16px;font-size:14px;color:#333;transform:translateX(-50%);">F</span>
<div class="r" style="left:232.7px;top:125.0px;width:0.9px;height:18.4px;background:#cbcbcb;"></div>
<span class="t" style="left:269.2px;top:127.2px;height:16px;line-height:16px;font-size:14px;color:#333;transform:translateX(-50%);">G</span>
<div class="r" style="left:305.8px;top:125.0px;width:0.9px;height:18.4px;background:#cbcbcb;"></div>
<span class="t" style="left:342.4px;top:127.2px;height:16px;line-height:16px;font-size:14px;color:#333;transform:translateX(-50%);">H</span>
<div class="r" style="left:378.9px;top:125.0px;width:0.9px;height:18.4px;background:#cbcbcb;"></div>
<span class="t" style="left:415.6px;top:127.2px;height:16px;line-height:16px;font-size:14px;color:#333;transform:translateX(-50%);">I</span>
<div class="r" style="left:452.1px;top:125.0px;width:0.9px;height:18.4px;background:#cbcbcb;"></div>
<span class="t" style="left:488.7px;top:127.2px;height:16px;line-height:16px;font-size:14px;color:#333;transform:translateX(-50%);">J</span>
<div class="r" style="left:525.3px;top:125.0px;width:0.9px;height:18.4px;background:#cbcbcb;"></div>
<span class="t" style="left:561.9px;top:127.2px;height:16px;line-height:16px;font-size:14px;color:#333;transform:translateX(-50%);">K</span>
<div class="r" style="left:598.4px;top:125.0px;width:0.9px;height:18.4px;background:#cbcbcb;"></div>
<span class="t" style="left:635.0px;top:127.2px;height:16px;line-height:16px;font-size:14px;color:#333;transform:translateX(-50%);">L</span>
<div class="r" style="left:671.6px;top:125.0px;width:0.9px;height:18.4px;background:#cbcbcb;"></div>
<span class="t" style="left:708.2px;top:127.2px;height:16px;line-height:16px;font-size:14px;color:#333;transform:translateX(-50%);">M</span>
<div class="r" style="left:744.7px;top:125.0px;width:0.9px;height:18.4px;background:#cbcbcb;"></div>
<span class="t" style="left:781.3px;top:127.2px;height:16px;line-height:16px;font-size:14px;color:#333;transform:translateX(-50%);">N</span>
<div class="r" style="left:817.9px;top:125.0px;width:0.9px;height:18.4px;background:#cbcbcb;"></div>
<span class="t" style="left:854.5px;top:127.2px;height:16px;line-height:16px;font-size:14px;color:#333;transform:translateX(-50%);">O</span>
<div class="r" style="left:891.0px;top:125.0px;width:0.9px;height:18.4px;background:#cbcbcb;"></div>
<div class="r" style="left:901.6px;top:144.0px;width:0.9px;height:390.0px;background:#ececec;"></div>
<div class="r" style="left:902.4px;top:143.6px;width:0.9px;height:390.4px;background:#bebebe;"></div>
<div class="r" style="left:903.3px;top:135.4px;width:3.7px;height:398.6px;background:#dadada;"></div>
<div class="r" style="left:903.3px;top:125.8px;width:0.8px;height:18.0px;background:#c8c8c8;"></div>
<div class="r" style="left:904.3px;top:125.8px;width:2.7px;height:9.6px;background:#fff;"></div>
<div class="r" style="left:0.0px;top:532.5px;width:907.0px;height:1.5px;background:#a4a4a4;"></div>
<div class="r" style="left:533.4px;top:55.4px;width:80.6px;height:169px;background:#fff;border:0.8px solid #c6c6c6;box-sizing:border-box;box-shadow:1px 1.5px 2.5px rgba(0,0,0,.22)"></div>
<div class="r" style="left:534.6px;top:86.2px;width:78.4px;height:14.4px;background:#c6c6c6;"></div>
<span class="t" style="left:553.6px;top:57.8px;height:12px;line-height:12px;font-size:7.3px;color:#7a7a7a;">左对齐(<u>L</u>)</span>
<span class="t" style="left:553.6px;top:72.7px;height:12px;line-height:12px;font-size:7.3px;color:#7a7a7a;">水平居中(<u>C</u>)</span>
<span class="t" style="left:553.6px;top:87.6px;height:12px;line-height:12px;font-size:7.3px;color:#3a3a3a;">右对齐(<u>R</u>)</span>
<span class="t" style="left:553.6px;top:104.1px;height:12px;line-height:12px;font-size:7.3px;color:#7a7a7a;">顶端对齐(<u>T</u>)</span>
<span class="t" style="left:553.6px;top:119.1px;height:12px;line-height:12px;font-size:7.3px;color:#7a7a7a;">垂直居中(<u>M</u>)</span>
<span class="t" style="left:553.6px;top:134.1px;height:12px;line-height:12px;font-size:7.3px;color:#7a7a7a;">底端对齐(<u>B</u>)</span>
<span class="t" style="left:553.6px;top:150.0px;height:12px;line-height:12px;font-size:7.3px;color:#7a7a7a;">横向分布(<u>H</u>)</span>
<span class="t" style="left:553.6px;top:165.1px;height:12px;line-height:12px;font-size:7.3px;color:#7a7a7a;">纵向分布(<u>V</u>)</span>
<span class="t" style="left:553.6px;top:181.4px;height:12px;line-height:12px;font-size:7.3px;color:#7a7a7a;">对齐网格(<u>P</u>)</span>
<span class="t" style="left:553.6px;top:196.1px;height:12px;line-height:12px;font-size:7.3px;color:#7a7a7a;">对齐形状(<u>S</u>)</span>
<span class="t" style="left:553.6px;top:211.0px;height:12px;line-height:12px;font-size:7.3px;color:#7a7a7a;">查看网格线(<u>G</u>)</span>
<div class="r" style="left:552.5px;top:101.9px;width:60.0px;height:0.8px;background:#ededed;"></div>
<div class="r" style="left:552.5px;top:147.4px;width:60.0px;height:0.8px;background:#e0e0e0;"></div>
<div class="r" style="left:552.5px;top:178.3px;width:60.0px;height:0.8px;background:#e0e0e0;"></div>
<svg style="left:536.2px;top:59.0px" width="9.6" height="9.6" viewBox="0 0 12 12" fill="none" stroke="#8a8a8a" stroke-width="0.85"><path d="M2.400 1.200V10.800" stroke="#5b7fb5"/><rect x="3.400" y="2.400" width="5.400" height="2.400"/><rect x="3.400" y="6.800" width="3.200" height="2.400"/></svg>
<svg style="left:536.2px;top:73.9px" width="9.6" height="9.6" viewBox="0 0 12 12" fill="none" stroke="#8a8a8a" stroke-width="0.85"><path d="M5.600 1V11" stroke="#5b7fb5"/><rect x="3.400" y="2.400" width="4.400" height="2.600" fill="#fff"/><rect x="1.800" y="6.800" width="7.600" height="2.600" fill="#fff"/></svg>
<svg style="left:536.2px;top:88.8px" width="9.6" height="9.6" viewBox="0 0 12 12" fill="none" stroke="#8a8a8a" stroke-width="0.85"><path d="M8.800 1.200V10.800" stroke="#5b7fb5"/><rect x="2.600" y="2.400" width="5.200" height="2.400"/><rect x="4.600" y="6.800" width="3.200" height="2.400"/></svg>
<svg style="left:536.2px;top:105.3px" width="9.6" height="9.6" viewBox="0 0 12 12" fill="none" stroke="#8a8a8a" stroke-width="0.85"><path d="M1.200 2.600H10.800" stroke="#5b7fb5"/><rect x="2.400" y="3.600" width="2.400" height="5.400"/><rect x="6.800" y="3.600" width="2.400" height="3.200"/></svg>
<svg style="left:536.2px;top:120.3px" width="9.6" height="9.6" viewBox="0 0 12 12" fill="none" stroke="#8a8a8a" stroke-width="0.85"><path d="M1 6H11" stroke="#5b7fb5"/><rect x="2.400" y="3.800" width="2.600" height="4.400" fill="#fff"/><rect x="6.800" y="2.200" width="2.600" height="7.600" fill="#fff"/></svg>
<svg style="left:536.2px;top:135.3px" width="9.6" height="9.6" viewBox="0 0 12 12" fill="none" stroke="#8a8a8a" stroke-width="0.85"><path d="M1.200 9.400H10.800" stroke="#5b7fb5"/><rect x="2.400" y="3" width="2.400" height="5.400"/><rect x="6.800" y="5.200" width="2.400" height="3.200"/></svg>
<svg style="left:536.2px;top:151.2px" width="9.6" height="9.6" viewBox="0 0 12 12" fill="none" stroke="#8a8a8a" stroke-width="0.85"><path d="M1.400 2V10M10.600 2V10" stroke="#5b7fb5"/><rect x="2.400" y="3" width="3" height="6"/><rect x="7" y="4.400" width="2.400" height="3.200"/></svg>
<svg style="left:536.2px;top:166.3px" width="9.6" height="9.6" viewBox="0 0 12 12" fill="none" stroke="#8a8a8a" stroke-width="0.85"><path d="M2 1.400H10M2 10.600H10" stroke="#5b7fb5"/><rect x="4.200" y="2.400" width="3.600" height="2.600"/><rect x="3" y="6.400" width="6" height="3"/></svg>
<svg style="left:536.2px;top:182.6px" width="9.6" height="9.6" viewBox="0 0 12 12" fill="none" stroke="#8a8a8a" stroke-width="0.85"><rect x="3" y="3" width="6" height="6" fill="#7f9fd4" stroke="none"/><path d="M1 3H11M1 9H11M3 1V11M9 1V11" stroke="#5b7fb5" stroke-width="0.800"/></svg>
<svg style="left:536.2px;top:197.3px" width="9.6" height="9.6" viewBox="0 0 12 12" fill="none" stroke="#8a8a8a" stroke-width="0.85"><rect x="1.200" y="3.400" width="6" height="6" fill="#5b7fb5" stroke="none"/><path d="M8.400 3.600L10.400 1.800V5z" fill="#555" stroke="none"/></svg>
<svg style="left:536.2px;top:212.2px" width="9.6" height="9.6" viewBox="0 0 12 12" fill="none" stroke="#8a8a8a" stroke-width="0.85"><rect x="0.400" y="1.400" width="11.200" height="9.200" fill="#dfe8f6" stroke="#5b7fb5"/><path d="M0.400 4.400H11.600M0.400 7.500H11.600M4.200 1.400V10.600M7.900 1.400V10.600" stroke="#5b7fb5"/></svg>
<svg style="left:555.5px;top:95px" width="9" height="13" viewBox="0 0 9 13"><path d="M0.600 0.800V10.600L2.900 8.400L4.600 12.200L6.100 11.500L4.500 7.800H7.600z" fill="#fff" stroke="#333" stroke-width="0.8" stroke-linejoin="round"/></svg>
</div></body></html>
